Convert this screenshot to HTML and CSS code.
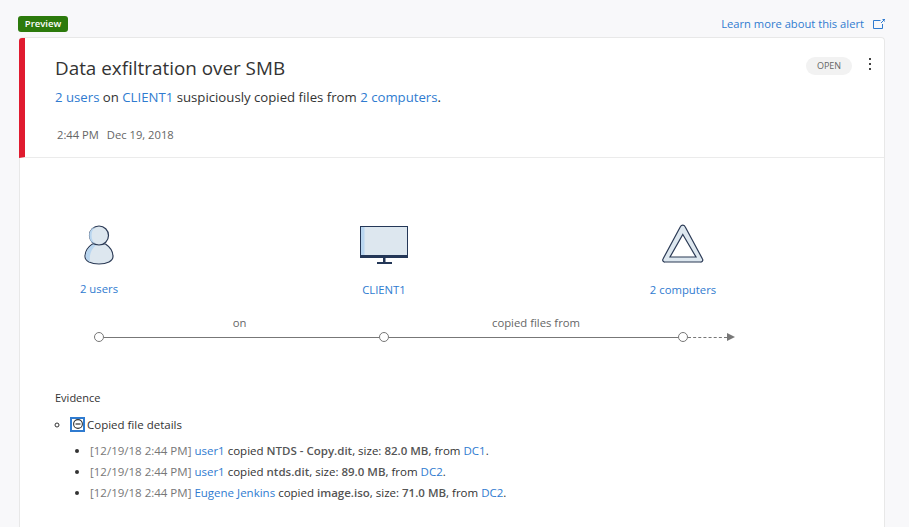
FILE: index.html
```html
<!DOCTYPE html>
<html lang="en">
<head>
<meta charset="utf-8">
<title>Data exfiltration over SMB</title>
<link rel="stylesheet" href="styles.css">
</head>
<body>
<div class="topbar">
  <span class="badge">Preview</span>
  <a class="learn">Learn more about this alert
    <svg class="ext" width="12" height="10" viewBox="0 0 12 10"><path d="M7.500 1.500H.5v8h9V5" fill="none" stroke="#2f7bd0"/><path d="M8 4l3-3M9.500.5H12V3" fill="none" stroke="#2f7bd0"/></svg>
  </a>
</div>
<main class="card">
  <header class="head">
    <div class="head-main">
      <h1 class="title">Data exfiltration over SMB</h1>
      <p class="desc"><a>2 users</a> on <a>CLIENT1</a> suspiciously copied files from <a>2 computers</a>.</p>
      <p class="time"><span class="clock">2:44 PM</span><span>Dec 19, 2018</span></p>
    </div>
    <div class="head-side">
      <span class="status">OPEN</span>
      <span class="more"><i></i><i></i><i></i></span>
    </div>
  </header>
  <section class="diagram">
    <div class="nodes">
      <div class="node node-a">
        <svg width="30" height="40" viewBox="0 0 30 40">
          <path d="M8.500 19C4 22 1 26.500 1 31.500 1 36 7 39 15 39s14-3 14-7.500c0-5-3-9.500-7.500-12.500z" fill="#dde7ef" stroke="#2b3a55" stroke-width="1.200"/>
          <path d="M8.500 19.800C4.500 22.500 1.700 26.500 1.700 31.500c0 2.500 1.800 4.300 4.300 5.500C5 30 7 24.500 12 20z" fill="#b9d6f0"/>
          <circle cx="15" cy="10.500" r="9.500" fill="#dde7ef" stroke="#2b3a55" stroke-width="1.200"/>
          <path d="M11 2.100a9 9 0 0 0 0 16.800 12 12 0 0 1 0-16.800z" fill="#b9d6f0"/>
        </svg>
        <a>2 users</a>
      </div>
      <div class="node node-b">
        <svg width="48" height="38" viewBox="0 0 48 38">
          <rect x="0" y="0" width="48" height="32" fill="#243757"/>
          <rect x="1" y="1" width="46" height="28" fill="#dde7ef"/>
          <rect x="1" y="1" width="3.500" height="28" fill="#b9d6f0"/>
          <rect x="23" y="32" width="2.500" height="5" fill="#243757"/>
          <rect x="17" y="36" width="15" height="2" fill="#243757"/>
        </svg>
        <a>CLIENT1</a>
      </div>
      <div class="node node-c">
        <svg width="42" height="40" viewBox="0 0 42 40">
          <path d="M18.500 2.500a2.500 2.500 0 0 1 4.500 0L40.500 35a2 2 0 0 1-2 3H3a2 2 0 0 1-2-3z" fill="#dde7ef" stroke="#2b3a55" stroke-width="1.200" stroke-linejoin="round"/>
          <path d="M20.800 10.500L34 33H8z" fill="#fff" stroke="#2b3a55" stroke-width="1.200" stroke-linejoin="miter"/>
        </svg>
        <a>2 computers</a>
      </div>
    </div>
    <div class="track">
      <span class="dot"></span>
      <div class="seg seg-a"><span>on</span></div>
      <span class="dot"></span>
      <div class="seg seg-b"><span>copied files from</span></div>
      <span class="dot"></span>
      <span class="dash"></span>
      <span class="arrow"></span>
    </div>
  </section>
  <section class="evidence">
    <h2 class="ev-title">Evidence</h2>
    <ul class="ev-outer">
      <li>
        <div class="ev-head">
          <span class="toggle"><svg width="10" height="10" viewBox="0 0 10 10"><circle cx="5" cy="5" r="4.400" fill="none" stroke="#333" stroke-width="1.100"/><path d="M2.500 5h5" stroke="#333" stroke-width="1.200"/></svg></span>
          Copied file details
        </div>
        <ul class="ev-inner">
          <li><span class="ts">[12/19/18 2:44 PM]</span> <a>user1</a> copied <b>NTDS - Copy.dit</b>, size: <b>82.0 MB</b>, from <a>DC1</a>.</li>
          <li><span class="ts">[12/19/18 2:44 PM]</span> <a>user1</a> copied <b>ntds.dit</b>, size: <b>89.0 MB</b>, from <a>DC2</a>.</li>
          <li><span class="ts">[12/19/18 2:44 PM]</span> <a>Eugene Jenkins</a> copied <b>image.iso</b>, size: <b>71.0 MB</b>, from <a>DC2</a>.</li>
        </ul>
      </li>
    </ul>
  </section>
</main>
</body>
</html>
```
FILE: styles.css
```css
html, body {
  margin: 0;
  height: 527px;
  overflow: hidden;
}
body {
  background: #f8f8fa;
  color: #333;
  font-family: "Open Sans", "Noto Sans", sans-serif;
  font-size: 11.500px;
  padding: 16px 24px 0 18px;
  box-sizing: border-box;
}
a { color: #2f7bd0; }
p, h1, h2, ul { margin: 0; padding: 0; }

.topbar {
  display: flex;
  justify-content: space-between;
  align-items: flex-start;
  height: 21px;
}
.badge {
  width: 50px;
  height: 16px;
  line-height: 16px;
  background: #2c7a0c;
  color: #fff;
  border-radius: 3px;
  font-size: 9.500px;
  font-weight: 600;
  text-align: center;
}
.learn {
  display: flex;
  align-items: center;
  gap: 9px;
  line-height: 16px;
  font-size: 11.200px;
}

.card {
  margin-left: 1px;
  background: #fff;
  border: 1px solid #e8e8e8;
  border-bottom: 0;
  border-radius: 4px 4px 0 0;
  height: 490px;
  box-sizing: border-box;
}
.head {
  display: flex;
  justify-content: space-between;
  height: 119px;
  border-left: 6px solid #e01b2f;
  border-bottom: 1px solid #ebebeb;
  border-top-left-radius: 3px;
  margin-left: -1px;
  box-sizing: content-box;
  padding-left: 30px;
}
.title {
  font-size: 18.850px;
  font-weight: 400;
  line-height: 26px;
  margin-top: 17px;
  color: #333;
}
.desc {
  font-size: 13.200px;
  line-height: 18px;
  margin-top: 7px;
}
.time {
  margin-top: 21px;
  margin-left: 2px;
  font-size: 11.200px;
  line-height: 16px;
  color: #666;
}
.clock { margin-right: 8px; }
.head-side {
  display: flex;
  align-items: flex-start;
  padding-top: 19px;
  padding-right: 13px;
}
.status {
  width: 46px;
  height: 18px;
  line-height: 18px;
  border-radius: 9px;
  background: #f2f2f2;
  color: #666;
  font-size: 9px;
  text-align: center;
}
.more {
  display: flex;
  flex-direction: column;
  gap: 3px;
  margin-left: 17px;
  margin-top: 1px;
  width: 2px;
}
.more i {
  width: 2px;
  height: 2px;
  background: #444;
}

.diagram { padding-top: 67px; }
.nodes {
  display: flex;
  margin-left: 29px;
}
.node {
  display: flex;
  flex-direction: column;
  align-items: center;
  width: 100px;
  font-size: 11.300px;
}
.node a { line-height: 16px; }
.node-a { margin-right: 185px; }
.node-a svg { margin-bottom: 16px; }
.node-b { margin-right: 199px; }
.node-b svg { margin-bottom: 18px; margin-top: 1px; }
.node-c svg { margin-bottom: 18px; margin-top: -1px; }

.track {
  display: flex;
  align-items: center;
  margin: 33px 0 0 74px;
  height: 12px;
}
.dot {
  flex: none;
  width: 8px;
  height: 8px;
  border: 1px solid #777;
  border-radius: 50%;
  background: #fff;
}
.seg {
  position: relative;
  height: 1px;
  background: #777;
}
.seg span {
  position: absolute;
  left: 0;
  right: 0;
  bottom: 7px;
  text-align: center;
  font-size: 11.300px;
  line-height: 16px;
  color: #666;
}
.seg-a { width: 275px; }
.seg-a span { padding-right: 4px; }
.seg-b { width: 289px; }
.seg-b span { padding-left: 5px; }
.dash {
  width: 39px;
  border-top: 1px dashed #777;
}
.arrow {
  width: 0;
  height: 0;
  border-left: 8px solid #777;
  border-top: 4px solid transparent;
  border-bottom: 4px solid transparent;
}

.evidence {
  padding: 47px 0 0 35px;
  font-size: 11.500px;
}
.ev-title {
  font-size: 11px;
  font-weight: 400;
  line-height: 16px;
}
.ev-outer {
  list-style: circle;
  padding-left: 15px;
  margin-top: 10px;
}
.ev-head {
  display: flex;
  align-items: center;
  gap: 2px;
  height: 16px;
}
.toggle {
  display: flex;
  align-items: center;
  justify-content: center;
  width: 11px;
  height: 11px;
  border: 2px solid #2f7bd0;
}
.ev-inner {
  list-style: disc;
  padding-left: 20px;
  margin-top: 8px;
  line-height: 21px;
}
.ts { color: #777; }
b { font-weight: 600; color: #555; }
```
